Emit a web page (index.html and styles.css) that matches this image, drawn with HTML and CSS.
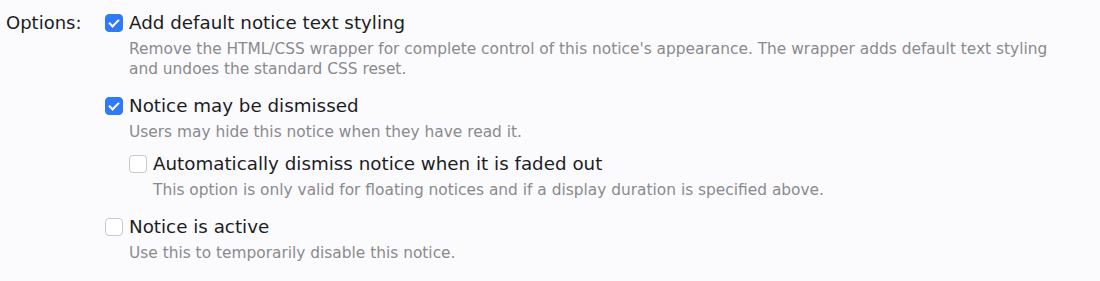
FILE: index.html
```html
<!DOCTYPE html>
<html lang="en">

<head>
    <meta charset="UTF-8">
    <title>Notice options</title>
    <link rel="stylesheet" href="styles.css">
</head>

<body>
    <div class="form_row">
        <div class="row_label">Options:</div>
        <ul class="option_list">
            <li class="option">
                <label class="check"><span class="box checked"></span>Add default notice text styling</label>
                <p class="hint">Remove the HTML/CSS wrapper for complete control of this notice's appearance. The wrapper adds default text styling and undoes the standard CSS reset.</p>
            </li>
            <li class="option">
                <label class="check"><span class="box checked"></span>Notice may be dismissed</label>
                <p class="hint">Users may hide this notice when they have read it.</p>
                <ul class="option_list sub">
                    <li class="option">
                        <label class="check"><span class="box"></span>Automatically dismiss notice when it is faded out</label>
                        <p class="hint">This option is only valid for floating notices and if a display duration is specified above.</p>
                    </li>
                </ul>
            </li>
            <li class="option">
                <label class="check"><span class="box"></span>Notice is active</label>
                <p class="hint">Use this to temporarily disable this notice.</p>
            </li>
        </ul>
    </div>
</body>

</html>
```

FILE: styles.css
```css
* {
    box-sizing: border-box;
    margin: 0;
    padding: 0;
}

body {
    background-color: #fbfbfe;
    font-family: "DejaVu Sans", sans-serif;
    color: #1d1d1f;
}

.form_row {
    display: flex;
    padding: 12px 0 0 6px;
}

.row_label {
    flex-shrink: 0;
    width: 99px;
    font-size: 18px;
    line-height: 22px;
}

.option_list {
    list-style: none;
}

.option {
    margin-bottom: 16px;
}

.sub {
    margin-top: 11px;
    padding-left: 24px;
}

.sub .option {
    margin-bottom: 0;
}

.check {
    display: flex;
    align-items: center;
    gap: 6px;
    font-size: 18.3px;
    line-height: 22px;
}

.box {
    flex-shrink: 0;
    width: 18px;
    height: 18px;
    border: 1px solid #c9c9cc;
    border-radius: 4px;
    background-color: #fff;
    display: flex;
    align-items: center;
    justify-content: center;
}

.box.checked {
    background-color: #2f7bf5;
    border-color: #2f7bf5;
}

.box.checked::after {
    content: "";
    width: 4px;
    height: 8px;
    border: solid #fff;
    border-width: 0 2px 2px 0;
    transform: translateY(-1px) rotate(45deg);
}

.hint {
    max-width: 965px;
    margin-top: 5px;
    padding-left: 24px;
    font-size: 15.4px;
    line-height: 20px;
    color: #8a8a8d;
}
```
